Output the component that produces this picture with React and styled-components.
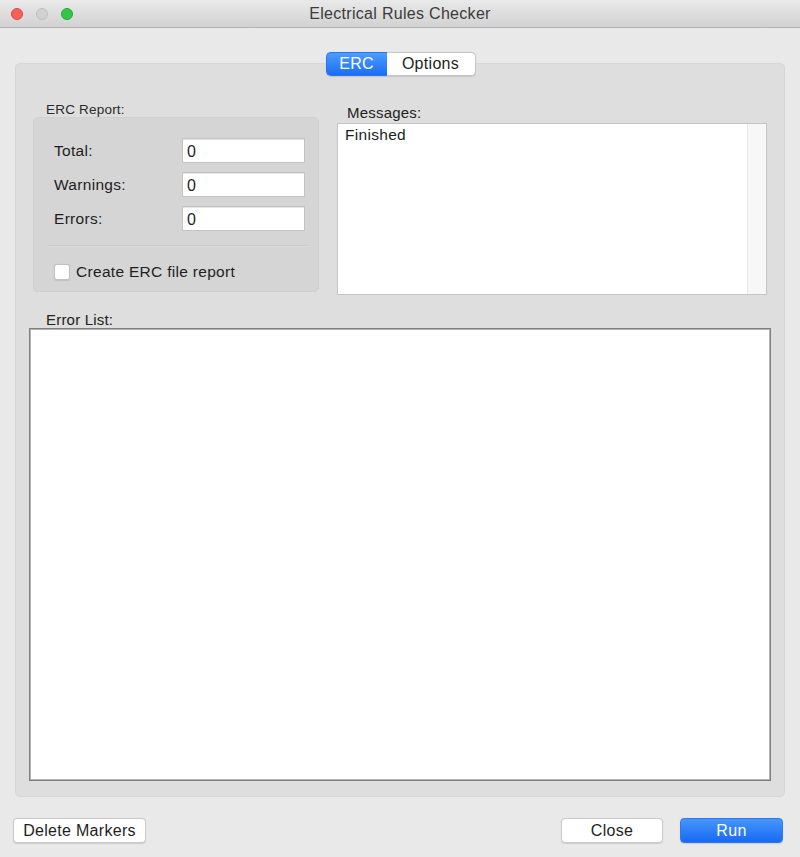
import React, { useState } from 'react'
import styled, { createGlobalStyle } from 'styled-components'

const GlobalStyle = createGlobalStyle`
  html, body {
    margin: 0;
    padding: 0;
    background: #ececec;
  }
  * {
    box-sizing: border-box;
  }
`

const Window = styled.div`
  width: 800px;
  height: 857px;
  display: flex;
  flex-direction: column;
  background: #e9e9e9;
  font-family: "Liberation Sans", Arial, sans-serif;
  color: #1e1e1e;
  overflow: hidden;
`

const TitleBar = styled.div`
  height: 28px;
  flex: none;
  display: flex;
  align-items: center;
  position: relative;
  background: linear-gradient(#e9e9e9, #d2d2d2);
  border-bottom: 1px solid #b4b4b4;
  padding-left: 11px;
`

const Lights = styled.div`
  display: flex;
  gap: 13px;
`

const Light = styled.span`
  width: 12px;
  height: 12px;
  border-radius: 50%;
  background: ${p => p.color};
  border: 1px solid ${p => p.edge};
`

const Title = styled.div`
  position: absolute;
  left: 0;
  right: 0;
  top: 0;
  bottom: 0;
  display: flex;
  align-items: center;
  justify-content: center;
  font-size: 16px;
  letter-spacing: 0.3px;
  color: #3b3b3b;
  pointer-events: none;
`

const Body = styled.div`
  flex: 1;
  display: flex;
  flex-direction: column;
  padding: 24px 15px 14px 15px;
`

const TabBar = styled.div`
  display: flex;
  justify-content: center;
  position: relative;
  z-index: 1;
  height: 24px;
  padding-left: 1px;
`

const Tab = styled.button`
  height: 24px;
  width: ${p => p.w}px;
  font-family: inherit;
  font-size: 16px;
  letter-spacing: 0.3px;
  padding: 0;
  cursor: pointer;
  color: ${p => (p.active ? '#ffffff' : '#1e1e1e')};
  background: ${p => (p.active ? 'linear-gradient(#4d9cfd, #1a6ef6)' : '#ffffff')};
  border: 1px solid ${p => (p.active ? '#2a76f0' : '#c8c8c8')};
  border-radius: ${p => (p.first ? '5px 0 0 5px' : '0 5px 5px 0')};
  ${p => (p.first ? 'border-right: none;' : 'border-left: none;')}
  box-shadow: 0 0.5px 1px rgba(0, 0, 0, 0.12);
`

const Panel = styled.div`
  margin-top: -13px;
  width: 770px;
  height: 734px;
  display: flex;
  flex-direction: column;
  background: #dedede;
  border: 1px solid #d6d6d6;
  border-radius: 5px;
  padding: 38px 13px 15px 13px;
`

const TopRow = styled.div`
  display: flex;
  gap: 18px;
  padding: 0 4px;
`

const LeftCol = styled.div`
  width: 286px;
  display: flex;
  flex-direction: column;
`

const RightCol = styled.div`
  flex: 1;
  display: flex;
  flex-direction: column;
  padding-top: 2px;
`

const SmallLabel = styled.div`
  font-size: 13.5px;
  letter-spacing: 0.2px;
  color: #2a2a2a;
  padding-left: ${p => p.indent || 13}px;
  height: 15px;
  line-height: 15px;
`

const Label = styled.div`
  font-size: 15px;
  letter-spacing: 0.2px;
  color: #222;
  padding-left: ${p => p.indent || 10}px;
  height: 17px;
  line-height: 17px;
`

const GroupBox = styled.div`
  height: 175px;
  background: #d5d5d5;
  border: 1px solid #d0d0d0;
  border-radius: 5px;
  padding: 20px 13px 0 14px;
  display: flex;
  flex-direction: column;
`

const FieldRow = styled.div`
  display: flex;
  align-items: center;
  height: 25px;
  margin-bottom: 9px;
  padding-left: 6px;
`

const FieldLabel = styled.span`
  flex: 1;
  font-size: 15.5px;
  letter-spacing: 0.3px;
`

const Field = styled.div`
  width: 123px;
  height: 25px;
  background: #fff;
  border: 1px solid #c3c3c3;
  box-shadow: inset 0 1px 0 #e4e4e4;
  font-size: 16px;
  padding: 4px 4px 0 4px;
`

const Separator = styled.div`
  height: 2px;
  background: #c9c9c9;
  border-bottom: 1px solid #dcdcdc;
  margin: 5px -3px 16px 1px;
`

const CheckRow = styled.label`
  display: flex;
  align-items: center;
  gap: 6px;
  padding-left: 6px;
  font-size: 15.5px;
  letter-spacing: 0.3px;
`

const CheckBox = styled.span`
  width: 16px;
  height: 16px;
  background: #fff;
  border: 1px solid #c0c0c0;
  border-radius: 3px;
  box-shadow: 0 0.5px 1px rgba(0, 0, 0, 0.1);
`

const MessageBox = styled.div`
  margin-top: 2px;
  height: 172px;
  display: flex;
  background: #fff;
  border: 1px solid #c4c4c4;
`

const MessageText = styled.div`
  flex: 1;
  font-size: 15.5px;
  letter-spacing: 0.3px;
  padding: 2px 7px;
`

const Scrollbar = styled.div`
  width: 19px;
  background: #f7f7f7;
  border-left: 1px solid #e6e6e6;
`

const ErrorSection = styled.div`
  flex: 1;
  display: flex;
  flex-direction: column;
  margin-top: 16px;
`

const ErrorList = styled.div`
  flex: 1;
  margin-top: 0;
  background: #fff;
  border: 1px solid #7f7f7f;
  box-shadow: inset 0 0 0 1px #b3b3b3;
`

const ButtonBar = styled.div`
  display: flex;
  align-items: center;
  margin-top: 21px;
  padding: 0 2px 0 0;
  margin-left: -2px;
`

const Spacer = styled.div`
  flex: 1;
`

const Button = styled.button`
  height: 25px;
  width: ${p => p.w}px;
  margin-left: ${p => p.gap || 0}px;
  font-family: inherit;
  font-size: 16px;
  letter-spacing: 0.3px;
  padding: 0;
  cursor: pointer;
  border-radius: 4px;
  color: ${p => (p.primary ? '#fff' : '#1e1e1e')};
  background: ${p => (p.primary ? 'linear-gradient(#4795fd, #176af3)' : '#fff')};
  border: 1px solid ${p => (p.primary ? '#2d78f0' : '#cbcbcb')};
  box-shadow: 0 0.5px 1px rgba(0, 0, 0, 0.12);
`

const App = () => {
  const [tab, setTab] = useState(0)
  const counts = [
    ['Total:', 0],
    ['Warnings:', 0],
    ['Errors:', 0],
  ]

  return (
    <>
      <GlobalStyle />
      <Window>
        <TitleBar>
          <Lights>
            <Light color="#fc5f57" edge="#df463e" />
            <Light color="#d1d1d1" edge="#bfbfbf" />
            <Light color="#33c748" edge="#25a537" />
          </Lights>
          <Title>Electrical Rules Checker</Title>
        </TitleBar>
        <Body>
          <TabBar>
            <Tab w={61} first active={tab === 0} onClick={() => setTab(0)}>ERC</Tab>
            <Tab w={89} active={tab === 1} onClick={() => setTab(1)}>Options</Tab>
          </TabBar>
          <Panel>
            <TopRow>
              <LeftCol>
                <SmallLabel indent={13}>ERC Report:</SmallLabel>
                <GroupBox>
                  {counts.map(([label, value]) => (
                    <FieldRow key={label}>
                      <FieldLabel>{label}</FieldLabel>
                      <Field>{value}</Field>
                    </FieldRow>
                  ))}
                  <Separator />
                  <CheckRow>
                    <CheckBox />
                    Create ERC file report
                  </CheckRow>
                </GroupBox>
              </LeftCol>
              <RightCol>
                <Label indent={10}>Messages:</Label>
                <MessageBox>
                  <MessageText>Finished</MessageText>
                  <Scrollbar />
                </MessageBox>
              </RightCol>
            </TopRow>
            <ErrorSection>
              <Label indent={17}>Error List:</Label>
              <ErrorList />
            </ErrorSection>
          </Panel>
          <ButtonBar>
            <Button w={133}>Delete Markers</Button>
            <Spacer />
            <Button w={102}>Close</Button>
            <Button w={103} gap={17} primary>Run</Button>
          </ButtonBar>
        </Body>
      </Window>
    </>
  )
}

export default App
